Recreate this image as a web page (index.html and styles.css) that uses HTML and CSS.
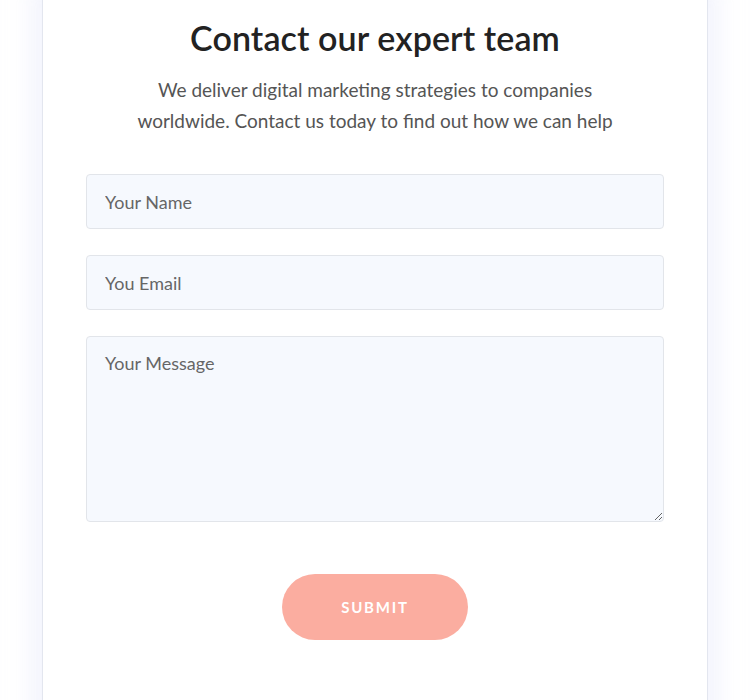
FILE: index.html
```html
<!DOCTYPE html>
<html lang="en">
<head>
<meta charset="utf-8">
<title>Contact</title>
<link rel="stylesheet" href="styles.css">
</head>
<body>
<div class="page">
  <section class="card">
    <h1 class="title">Contact our expert team</h1>
    <p class="lead">We deliver digital marketing strategies to companies<br>worldwide. Contact us today to find out how we can help</p>
    <form class="form">
      <input class="field" type="text" placeholder="Your Name">
      <input class="field" type="email" placeholder="You Email">
      <textarea class="field area" placeholder="Your Message"></textarea>
      <div class="actions"><button class="submit" type="button">SUBMIT</button></div>
    </form>
  </section>
</div>
</body>
</html>
```
FILE: styles.css
```css
html, body {
  margin: 0;
  padding: 0;
  background: #ffffff;
  overflow: hidden;
}
.page {
  width: 750px;
  height: 700px;
  overflow: hidden;
  padding-left: 42px;
  box-sizing: border-box;
}
.card {
  width: 666px;
  box-sizing: border-box;
  min-height: 760px;
  margin-top: -20px;
  padding: 35px 43px 0 43px;
  background: #ffffff;
  border: 1px solid #e3e6ef;
  box-shadow: 0 0 28px 6px rgba(225, 230, 250, 0.55);
  font-family: "Lato", "Liberation Sans", sans-serif;
}
.title {
  margin: 0;
  text-align: center;
  font-size: 34px;
  font-weight: 600;
  color: #222222;
  line-height: 44px;
  letter-spacing: 0.1px;
}
.lead {
  margin: 14px 0 0 0;
  text-align: center;
  font-size: 19px;
  line-height: 31px;
  color: #555555;
}
.form {
  margin-top: 38px;
  display: flex;
  flex-direction: column;
  gap: 26px;
}
.field {
  display: block;
  width: 578px;
  height: 55px;
  box-sizing: border-box;
  margin: 0;
  padding: 0 18px;
  background: #f6f9fe;
  border: 1px solid #e2e5ea;
  border-radius: 4px;
  font-family: "Lato", "Liberation Sans", sans-serif;
  font-size: 18px;
  color: #555;
  outline: none;
}
.field::placeholder {
  color: #666666;
}
.area {
  height: 186px;
  padding-top: 15px;
  resize: vertical;
}
.actions {
  display: flex;
  justify-content: center;
  margin-top: 26px;
}
.submit {
  width: 186px;
  height: 66px;
  border: none;
  border-radius: 33px;
  background: #fbada0;
  color: #ffffff;
  font-family: "Lato", "Liberation Sans", sans-serif;
  font-weight: 700;
  font-size: 15px;
  letter-spacing: 1.8px;
}
```
